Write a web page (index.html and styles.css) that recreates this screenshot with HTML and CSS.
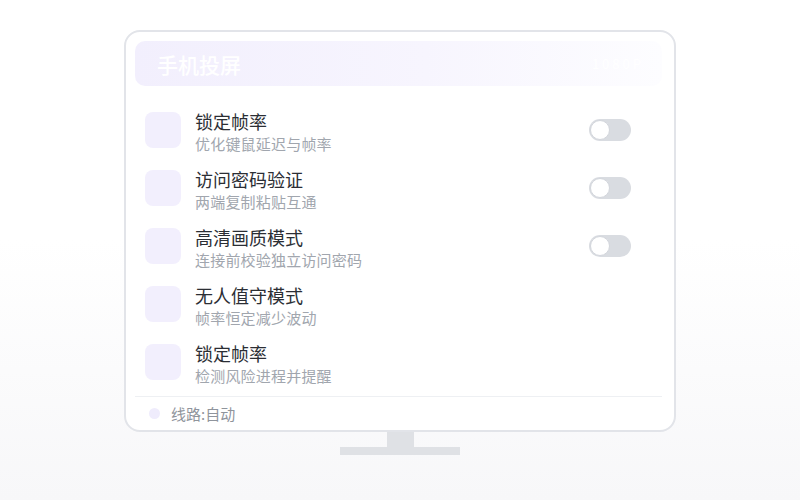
FILE: index.html
```html
<!DOCTYPE html>
<html lang="zh-CN">

<head>
  <meta charset="UTF-8">
  <meta name="viewport" content="width=device-width, initial-scale=1.0">
  <title>手机投屏</title>
  <link rel="stylesheet" href="styles.css">
</head>

<body>
  <div class="stage">
    <div class="monitor">
      <div class="screen-head">
        <span class="screen-title">手机投屏</span>
        <span class="screen-tag">1080P</span>
      </div>

      <ul class="options">
        <li class="option">
          <span class="option-icon"></span>
          <div class="option-text">
            <div class="option-name">锁定帧率</div>
            <div class="option-desc">优化键鼠延迟与帧率</div>
          </div>
          <span class="switch"></span>
        </li>
        <li class="option">
          <span class="option-icon"></span>
          <div class="option-text">
            <div class="option-name">访问密码验证</div>
            <div class="option-desc">两端复制粘贴互通</div>
          </div>
          <span class="switch"></span>
        </li>
        <li class="option">
          <span class="option-icon"></span>
          <div class="option-text">
            <div class="option-name">高清画质模式</div>
            <div class="option-desc">连接前校验独立访问密码</div>
          </div>
          <span class="switch"></span>
        </li>
        <li class="option">
          <span class="option-icon"></span>
          <div class="option-text">
            <div class="option-name">无人值守模式</div>
            <div class="option-desc">帧率恒定减少波动</div>
          </div>
        </li>
        <li class="option">
          <span class="option-icon"></span>
          <div class="option-text">
            <div class="option-name">锁定帧率</div>
            <div class="option-desc">检测风险进程并提醒</div>
          </div>
        </li>
      </ul>

      <div class="route">
        <span class="route-dot"></span>
        <span>线路:自动</span>
      </div>
    </div>

    <div class="neck"></div>
    <div class="base"></div>
  </div>
</body>

</html>
```

FILE: styles.css
```css
body {
  margin: 0;
  height: 500px;
  font-family: "Noto Sans CJK SC", "Noto Sans", sans-serif;
  background: linear-gradient(to bottom, #ffffff 0, #ffffff 240px, #f7f7f9 100%);
  overflow: hidden;
}

.stage {
  display: flex;
  flex-direction: column;
  align-items: center;
  padding-top: 30px;
}

.monitor {
  box-sizing: border-box;
  width: 552px;
  height: 402px;
  padding: 9px 12px 0 9px;
  background: #ffffff;
  border: 2px solid #e2e4e9;
  border-radius: 16px;
}

.screen-head {
  display: flex;
  align-items: center;
  justify-content: space-between;
  height: 45px;
  padding: 0 18px 0 22px;
  border-radius: 10px;
  background: linear-gradient(to right, #f2effd 0%, #f7f5fe 55%, #fdfdff 100%);
}

.screen-title {
  color: #ffffff;
  font-size: 21px;
  font-weight: 500;
}

.screen-tag {
  color: #ffffff;
  font-size: 13px;
  letter-spacing: 3px;
}

.options {
  list-style: none;
  margin: 0;
  padding: 15px 0 0;
}

.option {
  display: flex;
  align-items: center;
  height: 58px;
  padding: 0 31px 0 10px;
}

.option-icon {
  width: 36px;
  height: 36px;
  border-radius: 8px;
  background: #f2effd;
  flex-shrink: 0;
}

.option-text {
  flex: 1;
  margin: 4px 0 0 14px;
}

.option-name {
  font-size: 18px;
  line-height: 23px;
  color: #2b2e34;
}

.option-desc {
  font-size: 15px;
  line-height: 21px;
  letter-spacing: 0.2px;
  color: #a1a6ae;
}

.switch {
  position: relative;
  width: 42px;
  height: 22px;
  border-radius: 11px;
  background: #d9dce1;
}

.switch::after {
  content: "";
  position: absolute;
  left: 1px;
  top: 1px;
  width: 18px;
  height: 18px;
  border-radius: 50%;
  background: #ffffff;
  border: 1px solid #d3d6dc;
}

.route {
  display: flex;
  align-items: center;
  gap: 11px;
  margin-top: 5px;
  height: 32px;
  padding-left: 14px;
  border-top: 1px solid #eef0f3;
  font-size: 15px;
  color: #8f949c;
}

.route-dot {
  width: 11px;
  height: 11px;
  border-radius: 50%;
  background: #efecfc;
}

.neck {
  width: 27px;
  height: 15px;
  background: #dfe1e5;
}

.base {
  width: 120px;
  height: 8px;
  background: #dfe1e5;
}
```
